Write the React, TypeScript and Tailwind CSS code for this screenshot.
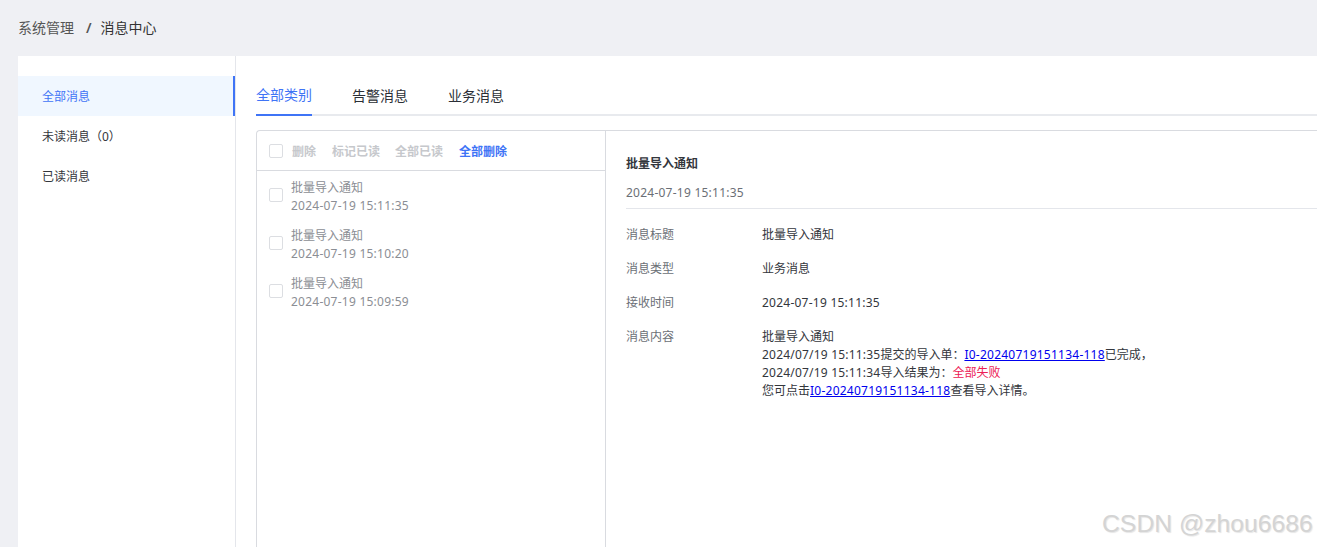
const FONT = '[font-family:"Noto_Sans","Noto_Sans_CJK_SC",sans-serif]';

function Box() {
  return <span className="block w-[14px] h-[14px] shrink-0 rounded-[2px] border border-[#dcdee2] bg-white" />;
}

function Row({ label, children }: { label: string; children: React.ReactNode }) {
  return (
    <div className="flex text-[12px] leading-[18px] mb-4">
      <div className="w-[136px] shrink-0 text-[#6b6f76]">{label}</div>
      <div className="text-[#33363c]">{children}</div>
    </div>
  );
}

const items = ["2024-07-19 15:11:35", "2024-07-19 15:10:20", "2024-07-19 15:09:59"];

export default function App() {
  return (
    <div className={`relative h-[547px] w-[1317px] overflow-hidden bg-[#eff0f4] ${FONT}`}>
      <div className="h-14 flex items-center pb-[2px] pl-[18px] text-[14px] text-[#333]">
        <span className="text-[#555]">系统管理</span>
        <span className="ml-[12px] mr-[9px] font-semibold text-[#555]">/</span>
        <span>消息中心</span>
      </div>
      <div className="ml-[18px] h-[491px] bg-white flex pt-5">
        <div className="w-[218px] shrink-0 border-r border-[#e4e6eb] -mt-5 pt-5 text-[12px]">
          <div className="h-10 flex items-center pl-6 pt-[2px] bg-[#f0f7ff] text-[#3f74f6] border-r-2 border-[#3f74f6]">全部消息</div>
          <div className="h-10 flex items-center pl-6 pt-[2px] text-[#33363c]">未读消息（0）</div>
          <div className="h-10 flex items-center pl-6 pt-[2px] text-[#33363c]">已读消息</div>
        </div>
        <div className="flex-1 pl-5 min-w-0">
          <div className="h-10 flex gap-10 border-b-2 border-[#e8eaee] text-[14px] text-[#2b2f36]">
            <div className="h-10 flex items-center pb-[2px] border-b-2 border-[#3f74f6] text-[#3f74f6]">全部类别</div>
            <div className="h-10 flex items-center pb-[2px]">告警消息</div>
            <div className="h-10 flex items-center pb-[2px]">业务消息</div>
          </div>
          <div className="mt-[14px] h-[430px] flex border border-r-0 border-[#d9dbe0] rounded-tl-[4px]">
            <div className="w-[349px] shrink-0 border-r border-[#d9dbe0]">
              <div className="h-10 flex items-center pl-3 border-b border-[#d9dbe0] text-[12px] font-bold text-[#c6c8cc]">
                <Box />
                <span className="ml-[9px] pt-[2px]">删除</span>
                <span className="ml-4 pt-[2px]">标记已读</span>
                <span className="ml-[15px] pt-[2px]">全部已读</span>
                <span className="ml-4 pt-[2px] text-[#3f74f6]">全部删除</span>
              </div>
              {items.map((d) => (
                <div key={d} className="h-12 flex items-center pl-3 text-[12px] leading-[18px] text-[#8b8e94]">
                  <Box />
                  <div className="ml-2 pt-1">
                    <div>批量导入通知</div>
                    <div className="tracking-[0.24px]">{d}</div>
                  </div>
                </div>
              ))}
            </div>
            <div className="flex-1 pl-5 min-w-0">
              <div className="h-[78px] border-b border-[#e4e6eb] pt-6">
                <div className="text-[12px] leading-[18px] font-bold text-[#33363c]">批量导入通知</div>
                <div className="mt-[11px] text-[12px] leading-[18px] text-[#6b6f76] tracking-[0.24px]">2024-07-19 15:11:35</div>
              </div>
              <div className="pt-[17px]">
                <Row label="消息标题">批量导入通知</Row>
                <Row label="消息类型">业务消息</Row>
                <Row label="接收时间"><span className="tracking-[0.24px]">2024-07-19 15:11:35</span></Row>
                <Row label="消息内容">
                  <div>批量导入通知</div>
                  <div>
                    <span className="tracking-[0.2px]">2024/07/19 15:11:35</span>提交的导入单：
                    <a className="text-[#0000ee] underline tracking-[0.24px]">I0-20240719151134-118</a>已完成，
                  </div>
                  <div>
                    <span className="tracking-[0.2px]">2024/07/19 15:11:34</span>导入结果为：
                    <span className="text-[#ec2055]">全部失败</span>
                  </div>
                  <div>
                    您可点击<a className="text-[#0000ee] underline tracking-[0.24px]">I0-20240719151134-118</a>查看导入详情。
                  </div>
                </Row>
              </div>
            </div>
          </div>
        </div>
      </div>
      <div className="absolute left-[1102px] top-[510px] text-[24.75px] leading-[28px] whitespace-nowrap text-[#d4d4d4] [text-shadow:1px_1px_1px_#e6e6e6] [font-family:'Liberation_Sans',sans-serif]">
        CSDN @zhou6686
      </div>
    </div>
  );
}
